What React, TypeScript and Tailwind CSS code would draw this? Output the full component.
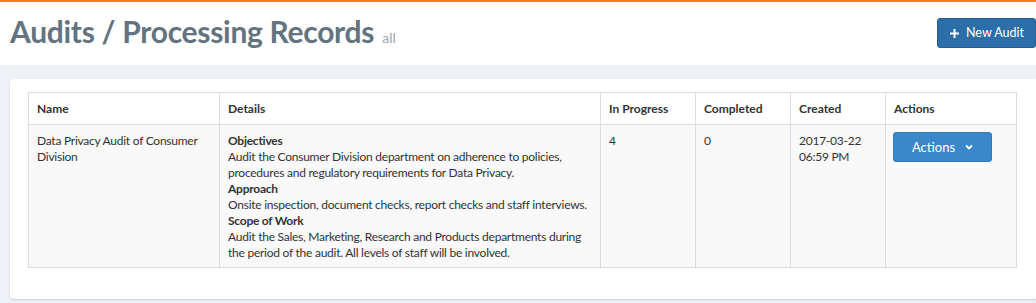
import React from "react";

const audits = [
  {
    name: "Data Privacy Audit of Consumer Division",
    objectives:
      "Audit the Consumer Division department on adherence to policies, procedures and regulatory requirements for Data Privacy.",
    approach:
      "Onsite inspection, document checks, report checks and staff interviews.",
    scope:
      "Audit the Sales, Marketing, Research and Products departments during the period of the audit. All levels of staff will be involved.",
    inProgress: 4,
    completed: 0,
    created: ["2017-03-22", "06:59 PM"],
  },
];

const App = () => {
  return (
    <div
      className="min-h-[303px] bg-[#eef2f6] text-[#333] border-t-2 border-[#f47b20]"
      style={{ fontFamily: '"Lato", "Noto Sans", sans-serif' }}
    >
      <div className="bg-white h-[63px] flex items-start justify-between pl-[10px]">
        <h1 className="mt-[9px] text-[30px] font-bold text-[#637380] leading-[40px] tracking-[-0.3px]">
          Audits / Processing Records
          <small className="ml-[8px] text-[14px] font-normal text-[#9aa6b0] tracking-normal">
            all
          </small>
        </h1>
        <button className="mt-[16px] w-[99px] h-[30px] flex items-center justify-center gap-[6px] rounded-[3px] bg-[#2c6ea8] border border-[#255f91] text-white text-[12.5px]">
          <svg width="11" height="11" viewBox="0 0 11 11">
            <path d="M5.5 1v9M1 5.5h9" stroke="white" strokeWidth="2" />
          </svg>
          New Audit
        </button>
      </div>

      <div className="mt-[14px] ml-[10px] bg-white rounded-l-[4px] shadow-[0_1px_2px_rgba(0,0,0,0.15)] pt-[13px] pb-[31px] pl-[18px] pr-[19px]">
        <table className="w-full border-collapse text-[12px] leading-[16px] tracking-[-0.25px]">
          <thead>
            <tr className="bg-white tracking-normal">
              <th className="w-[191px] h-[32px] border border-[#dddddd] px-[8px] text-left font-bold">Name</th>
              <th className="w-[381px] border border-[#dddddd] px-[8px] text-left font-bold">Details</th>
              <th className="w-[95px] border border-[#dddddd] px-[8px] text-left font-bold">In Progress</th>
              <th className="w-[95px] border border-[#dddddd] px-[8px] text-left font-bold">Completed</th>
              <th className="w-[95px] border border-[#dddddd] px-[8px] text-left font-bold">Created</th>
              <th className="border border-[#dddddd] px-[8px] text-left font-bold">Actions</th>
            </tr>
          </thead>
          <tbody>
            {audits.map((a, idx) => (
              <tr key={idx} className="bg-[#f9f9f9] align-top">
                <td className="border border-[#dddddd] px-[8px] pt-[8px] pb-[6px]">{a.name}</td>
                <td className="border border-[#dddddd] px-[8px] pt-[8px] pb-[6px]">
                  <div className="font-bold">Objectives</div>
                  <div>{a.objectives}</div>
                  <div className="font-bold">Approach</div>
                  <div>{a.approach}</div>
                  <div className="font-bold">Scope of Work</div>
                  <div>{a.scope}</div>
                </td>
                <td className="border border-[#dddddd] px-[8px] pt-[8px]">{a.inProgress}</td>
                <td className="border border-[#dddddd] px-[8px] pt-[8px]">{a.completed}</td>
                <td className="border border-[#dddddd] px-[8px] pt-[8px]">
                  {a.created[0]}
                  <br />
                  {a.created[1]}
                </td>
                <td className="border border-[#dddddd] px-[7px] pt-[7px]">
                  <button className="w-[99px] h-[30px] flex items-center justify-center gap-[10px] rounded-[3px] bg-[#3a88c9] border border-[#337bb8] text-white text-[13px] tracking-normal">
                    Actions
                    <svg width="8" height="6" viewBox="0 0 8 6">
                      <path d="M1 1.5l3 3 3-3" stroke="white" strokeWidth="1.8" fill="none" />
                    </svg>
                  </button>
                </td>
              </tr>
            ))}
          </tbody>
        </table>
      </div>
    </div>
  );
};

export default App;
